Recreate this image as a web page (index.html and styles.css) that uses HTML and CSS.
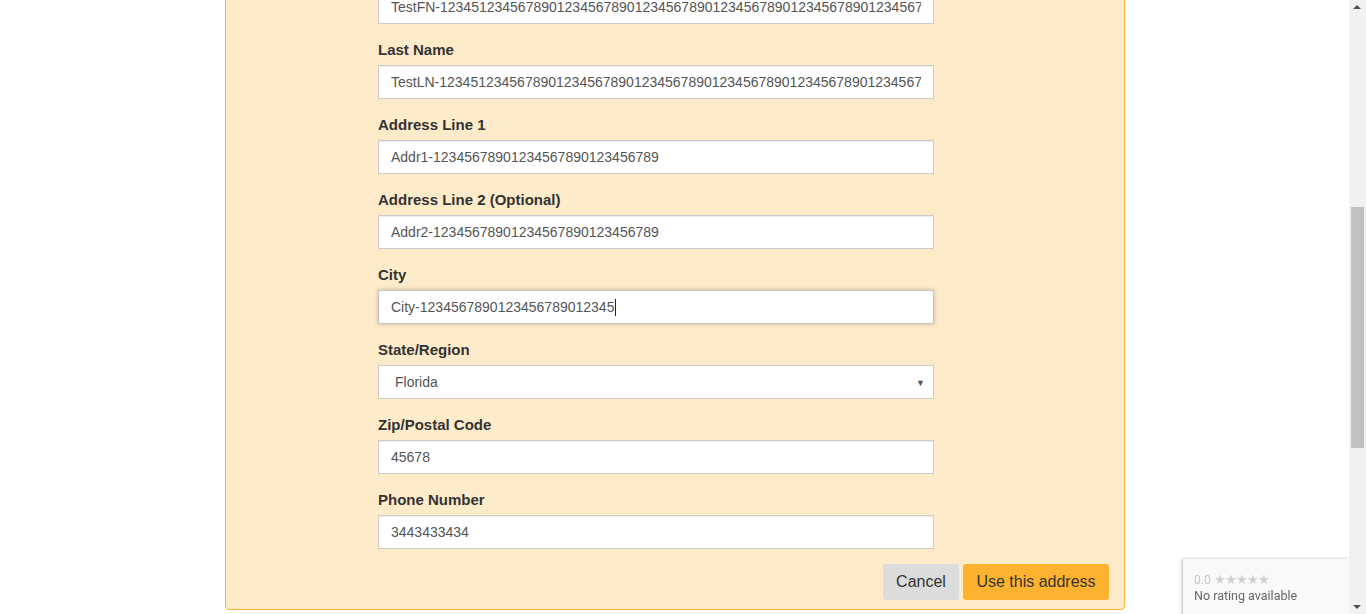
FILE: index.html
```html
<!DOCTYPE html>
<html lang="en">
<head>
<meta charset="utf-8">
<title>Edit address</title>
<link rel="stylesheet" href="styles.css">
</head>
<body>
<main class="page">
  <section class="panel">
    <form class="form">
      <div class="group">
        <label class="label">First Name</label>
        <input class="input" type="text" value="TestFN-12345123456789012345678901234567890123456789012345678901234567">
      </div>
      <div class="group">
        <label class="label">Last Name</label>
        <input class="input" type="text" value="TestLN-12345123456789012345678901234567890123456789012345678901234567">
      </div>
      <div class="group">
        <label class="label">Address Line 1</label>
        <input class="input" type="text" value="Addr1-12345678901234567890123456789">
      </div>
      <div class="group">
        <label class="label">Address Line 2 (Optional)</label>
        <input class="input" type="text" value="Addr2-12345678901234567890123456789">
      </div>
      <div class="group">
        <label class="label">City</label>
        <div class="focus-wrap">
          <input class="input input-focus" type="text" value="City-1234567890123456789012345">
          <span class="caret"></span>
        </div>
      </div>
      <div class="group">
        <label class="label">State/Region</label>
        <div class="select">
          <span class="select-value">Florida</span>
          <span class="select-arrow">▼</span>
        </div>
      </div>
      <div class="group">
        <label class="label">Zip/Postal Code</label>
        <input class="input" type="text" value="45678">
      </div>
      <div class="group">
        <label class="label">Phone Number</label>
        <input class="input" type="text" value="3443433434">
      </div>
    </form>
    <div class="actions">
      <button class="btn btn-cancel" type="button">Cancel</button>
      <button class="btn btn-primary" type="button">Use this address</button>
    </div>
  </section>
</main>

<aside class="rating">
  <div class="rating-score">0.0 <span class="stars">★★★★★</span></div>
  <div class="rating-text">No rating available</div>
</aside>

<div class="scrollbar">
  <span class="sb-up"></span>
  <span class="sb-thumb"></span>
  <span class="sb-down"></span>
</div>
</body>
</html>
```

FILE: styles.css
```css
* { box-sizing: border-box; }

html, body {
  margin: 0;
  padding: 0;
  height: 100%;
  overflow: hidden;
  background: #ffffff;
}

body {
  font-family: "Liberation Sans", Arial, sans-serif;
  color: #333333;
}

.page {
  width: 1349px;
  display: flex;
  justify-content: flex-start;
  padding-left: 225px;
}

.panel {
  width: 900px;
  margin-top: -91px;
  background: #feebca;
  border: 1px solid #fbb437;
  border-radius: 4px;
  padding: 54px 15px 9px 152px;
  display: flex;
  flex-direction: column;
}

.form {
  width: 556px;
  display: flex;
  flex-direction: column;
}

.group {
  display: flex;
  flex-direction: column;
  margin-bottom: 15px;
}

.label {
  font-size: 15px;
  font-weight: bold;
  line-height: 21px;
  margin-bottom: 5px;
  color: #333333;
}

.input {
  width: 556px;
  height: 34px;
  margin: 0;
  padding: 0 12px;
  font-family: "Liberation Sans", Arial, sans-serif;
  font-size: 14px;
  color: #555555;
  background: #ffffff;
  border: 1px solid #cccccc;
  border-radius: 0;
  box-shadow: inset 0 1px 1px rgba(0, 0, 0, 0.075);
  outline: none;
}

.focus-wrap {
  position: relative;
  width: 556px;
}

.input-focus {
  border-color: #c6c6c6;
  box-shadow: 0 0 4px rgba(0, 0, 0, 0.25);
}

.caret {
  position: absolute;
  left: 237px;
  top: 9px;
  width: 1px;
  height: 17px;
  background: #222222;
}

.select {
  width: 556px;
  height: 34px;
  background: #ffffff;
  border: 1px solid #cccccc;
  display: flex;
  align-items: center;
  justify-content: space-between;
  padding: 0 8px 0 16px;
  font-size: 14px;
  color: #555555;
}

.select-arrow {
  font-size: 9px;
  color: #555555;
  padding-top: 1px;
}

.actions {
  display: flex;
  justify-content: flex-end;
  gap: 4px;
}

.btn {
  height: 36px;
  border: none;
  border-radius: 3px;
  font-family: "Liberation Sans", Arial, sans-serif;
  font-size: 16px;
  color: #333333;
  padding: 0 13px;
  cursor: pointer;
}

.btn-cancel {
  background: #dcdcdc;
  width: 76px;
}

.btn-primary {
  background: #fdb330;
  width: 146px;
}

.rating {
  position: fixed;
  left: 1183px;
  top: 559px;
  width: 166px;
  height: 70px;
  background: #f9f9f9;
  box-shadow: -1px 0 3px rgba(0, 0, 0, 0.28);
  padding: 13px 11px;
  font-family: Roboto, "Liberation Sans", sans-serif;
}

.rating-score {
  font-size: 12px;
  line-height: 15px;
  color: #c7c7c7;
}

.stars {
  font-size: 13px;
  letter-spacing: -1px;
  color: #cfcfcf;
}

.rating-text {
  font-size: 12.5px;
  line-height: 16px;
  color: #666666;
}

.scrollbar {
  position: fixed;
  top: 0;
  right: 0;
  width: 17px;
  height: 614px;
  background: #f1f1f1;
}

.sb-thumb {
  position: absolute;
  left: 2px;
  top: 207px;
  width: 13px;
  height: 241px;
  background: #c1c1c1;
}

.sb-up,
.sb-down {
  position: absolute;
  left: 4px;
  width: 0;
  height: 0;
  border-left: 4px solid transparent;
  border-right: 4px solid transparent;
}

.sb-up {
  top: 5px;
  border-bottom: 4px solid #505050;
}

.sb-down {
  bottom: 5px;
  border-top: 4px solid #505050;
}
```
